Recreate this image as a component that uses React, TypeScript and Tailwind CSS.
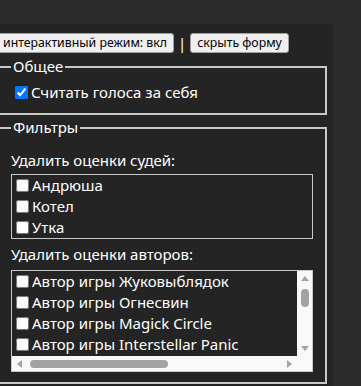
import React from 'react';

const JUDGES = ['Андрюша', 'Котел', 'Утка'];

// only the rows visible at the top of the scrolled list
const AUTHORS = ['Жуковыблядок', 'Огнесвин', 'Magick Circle', 'Interstellar Panic'];

const BORDER = 'border-[#c8c8c8]';

function Checkbox(props: { label: string; checked?: boolean }) {
  const { label, checked } = props;
  return (
    <label className="flex items-center h-[21px] whitespace-nowrap">
      <input
        type="checkbox"
        defaultChecked={checked}
        className="ml-1 mr-[3px] w-[13px] h-[13px] shrink-0"
      />
      {label}
    </label>
  );
}

function Arrow(props: { dir: 'up' | 'down' | 'left' | 'right' }) {
  const points = {
    up: '4,1 8,6 0,6',
    down: '0,1 8,1 4,6',
    left: '6,0 6,8 1,4',
    right: '1,0 1,8 6,4',
  }[props.dir];
  const vertical = props.dir === 'up' || props.dir === 'down';
  return (
    <svg width={vertical ? 8 : 7} height={vertical ? 7 : 8} className="shrink-0">
      <polygon points={points} fill="#a3a3a3" />
    </svg>
  );
}

// headless chrome hides native scrollbars, so they are drawn by hand
function ScrollBox(props: { children: React.ReactNode }) {
  return (
    <div className={`border ${BORDER} grid grid-cols-[1fr_15px] grid-rows-[85px_15px]`}>
      <div className="overflow-hidden">{props.children}</div>
      <div className="bg-[#f8f8f8] flex flex-col items-center">
        <div className="h-[15px] flex items-center justify-center">
          <Arrow dir="up" />
        </div>
        <div className="mt-[3px] w-[8px] h-[18px] rounded-full bg-[#a3a3a3]" />
        <div className="flex-1" />
        <div className="h-[15px] flex items-center justify-center">
          <Arrow dir="down" />
        </div>
      </div>
      <div className="bg-[#f8f8f8] flex items-center">
        <div className="w-[15px] flex items-center justify-center">
          <Arrow dir="left" />
        </div>
        <div className="ml-[3px] h-[8px] w-[138px] rounded-full bg-[#a3a3a3]" />
        <div className="flex-1" />
        <div className="w-[15px] flex items-center justify-center">
          <Arrow dir="right" />
        </div>
      </div>
      <div className="bg-[#f8f8f8]" />
    </div>
  );
}

export default function App() {
  return (
    <div className="min-h-screen overflow-hidden bg-[#2b2b2b] text-white font-['Noto_Sans',sans-serif] text-[15px] leading-[21px]">
      <div className="mt-6 ml-[-13px] w-[346px] bg-[#242424] pl-2 pr-1 pt-2 pb-6">
        <div className="flex items-center gap-[4px] h-[22px]">
          <button className="ml-px h-5 px-[6px] bg-[#efefef] text-black border border-[#a0a0a0] rounded-[3px] text-[12.3px] leading-[18px]">
            интерактивный режим: вкл
          </button>
          <span>|</span>
          <button className="h-5 px-[6px] bg-[#efefef] text-black border border-[#a0a0a0] rounded-[3px] text-[12.3px] leading-[18px]">
            скрыть форму
          </button>
        </div>

        <fieldset className={`min-w-0 mx-[2px] mt-[2px] border-2 ${BORDER} px-3 pt-[5px] pb-[10px]`}>
          <legend className="px-0.5">Общее</legend>
          <Checkbox label="Считать голоса за себя" checked />
        </fieldset>

        <fieldset className={`min-w-0 mx-[2px] mt-[2px] border-2 ${BORDER} px-3 pt-[5px] pb-[10px]`}>
          <legend className="px-0.5">Фильтры</legend>
          <div className="mt-[7px] mb-[3px]">Удалить оценки судей:</div>
          <div className={`border ${BORDER}`}>
            {JUDGES.map((name) => (
              <Checkbox key={name} label={name} />
            ))}
          </div>
          <div className="mt-[5px] mb-[5px]">Удалить оценки авторов:</div>
          <ScrollBox>
            {AUTHORS.map((name) => (
              <Checkbox key={name} label={`Автор игры ${name}`} />
            ))}
          </ScrollBox>
        </fieldset>
      </div>
    </div>
  );
}
